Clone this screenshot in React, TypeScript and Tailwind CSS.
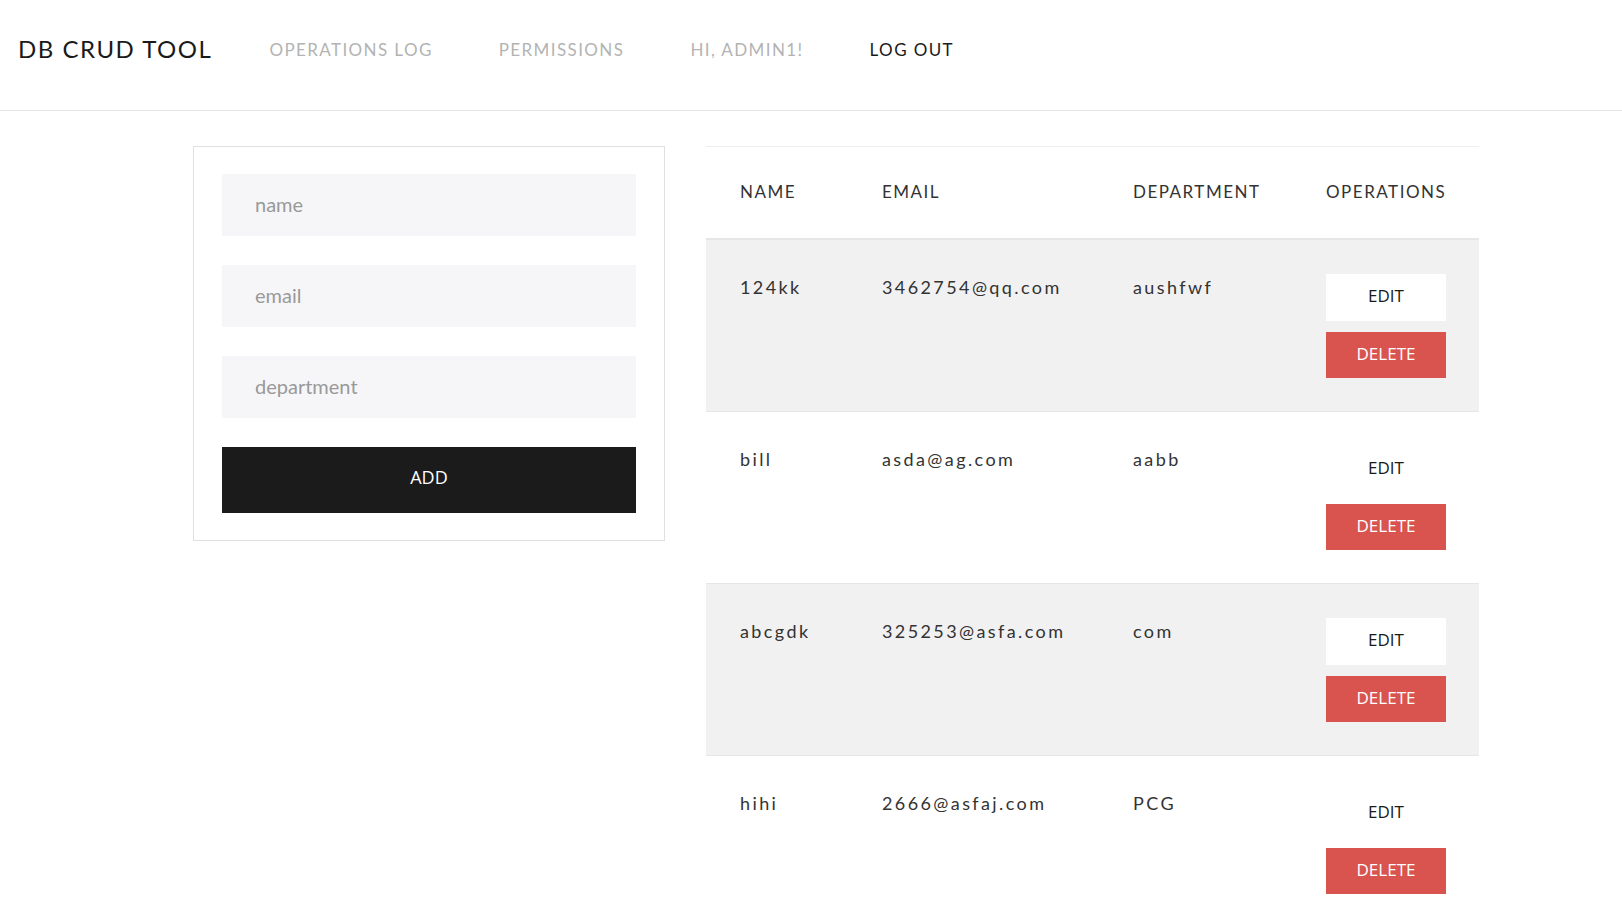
import { useState } from "react";

type Employee = {
  name: string;
  email: string;
  department: string;
};

const employees: Employee[] = [
  { name: "124kk", email: "3462754@qq.com", department: "aushfwf" },
  { name: "bill", email: "asda@ag.com", department: "aabb" },
  { name: "abcgdk", email: "325253@asfa.com", department: "com" },
  { name: "hihi", email: "2666@asfaj.com", department: "PCG" },
];

const navLinks = ["OPERATIONS LOG", "PERMISSIONS", "HI, ADMIN1!"];

function Header() {
  return (
    <header className="flex h-[111px] items-center border-b border-[#e6e6e6] pb-[12px] pl-[18px]">
      <h1 className="mr-[57px] text-[24px] leading-none tracking-[1.5px] text-[#1a1a1a]">
        DB CRUD TOOL
      </h1>
      <nav className="flex items-center gap-[66px] text-[17px] leading-none tracking-[1.4px]">
        {navLinks.map((link) => (
          <a key={link} href="#" className="text-[#b3b3b3]">
            {link}
          </a>
        ))}
        <a href="#" className="text-[#1a1a1a]">
          LOG OUT
        </a>
      </nav>
    </header>
  );
}

function AddForm() {
  const [form, setForm] = useState({ name: "", email: "", department: "" });

  return (
    <div className="flex w-[472px] shrink-0 flex-col gap-[29px] border border-[#e0e0e0] px-[28px] pt-[27px] pb-[27px]">
      {(["name", "email", "department"] as const).map((field) => (
        <input
          key={field}
          value={form[field]}
          onChange={(e) => setForm({ ...form, [field]: e.target.value })}
          placeholder={field}
          className="h-[62px] w-full bg-[#f6f6f8] px-[33px] pb-[2px] text-[20px] text-[#333] outline-none placeholder:text-[#999]"
        />
      ))}
      <button className="h-[66px] w-full bg-[#1b1b1b] pb-[6px] font-['Open_Sans',sans-serif] text-[18px] font-medium text-white">
        ADD
      </button>
    </div>
  );
}

function EmployeeTable() {
  return (
    <div className="w-[773px] shrink-0 border-t border-[#eeeeee]">
      <div className="grid h-[93px] grid-cols-[142px_251px_193px_187px] items-center border-b-2 border-[#e6e6e6] pb-[2px] text-[17px] tracking-[1.5px] text-[#333]">
        <div className="pl-[34px]">NAME</div>
        <div className="pl-[34px]">EMAIL</div>
        <div className="pl-[34px]">DEPARTMENT</div>
        <div className="pl-[34px]">OPERATIONS</div>
      </div>
      {employees.map((emp, i) => (
        <div
          key={emp.name}
          className={`grid grid-cols-[142px_251px_193px_187px] items-start border-b border-[#e6e6e6] pt-[34px] pb-[33px] text-[18px] leading-[26px] tracking-[2.4px] text-[#333] ${
            i % 2 === 0 ? "bg-[#f1f1f1]" : "bg-white"
          }`}
        >
          <div className="pl-[34px]">{emp.name}</div>
          <div className="pl-[34px]">{emp.email}</div>
          <div className="pl-[34px]">{emp.department}</div>
          <div className="flex flex-col gap-[11px] pl-[34px] font-['Open_Sans',sans-serif] tracking-normal">
            <button className="h-[47px] w-[120px] bg-white pb-[4px] text-[17px] text-[#1a1a1a]">
              EDIT
            </button>
            <button className="h-[46px] w-[120px] bg-[#d9534f] pb-[3px] text-[17px] text-white">
              DELETE
            </button>
          </div>
        </div>
      ))}
    </div>
  );
}

export default function App() {
  return (
    <div className="min-h-screen bg-white font-['Lato',sans-serif]">
      <Header />
      <main className="flex items-start gap-[41px] pt-[35px] pl-[193px]">
        <AddForm />
        <EmployeeTable />
      </main>
    </div>
  );
}
